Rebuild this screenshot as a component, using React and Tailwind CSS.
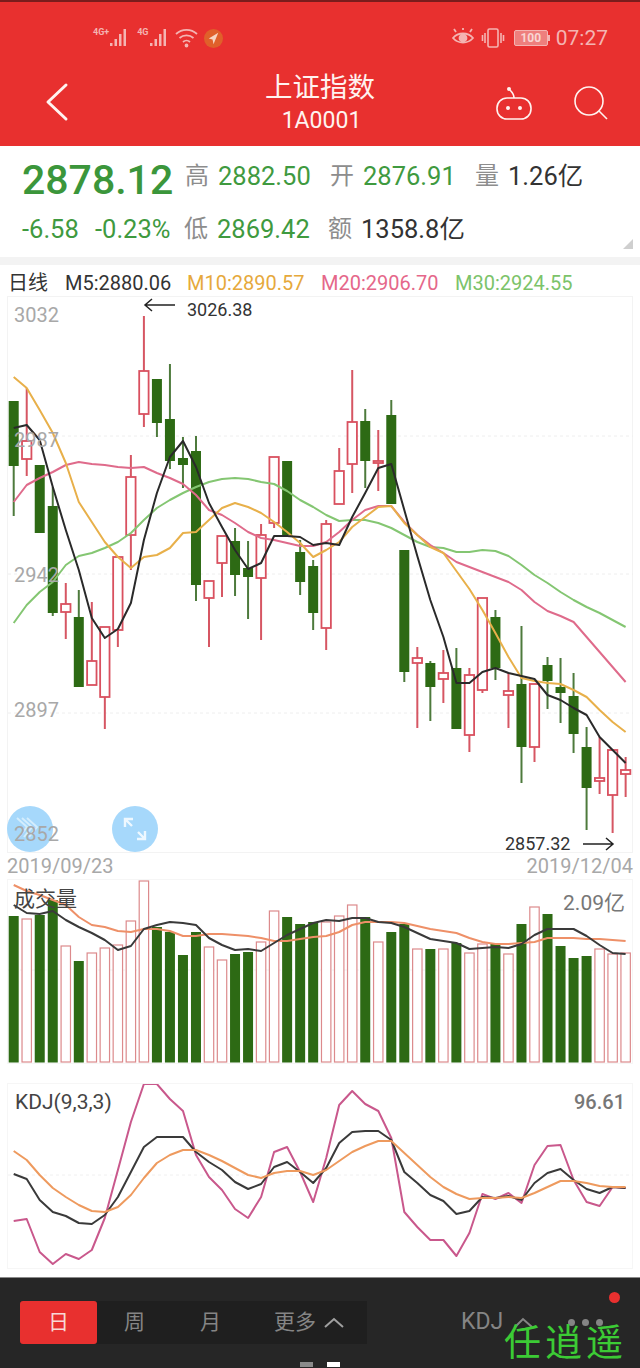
import React from "react";

const xAt = (i) => 13.7 + 13.02 * i;

// [high, bodyTop, bodyBottom, low, isUp]
const candles = [
  [401, 401, 466, 516, 0], [388, 441, 459, 476, 1], [465, 465, 533, 533, 0], [487, 506, 613, 616, 0],
  [583, 604, 612, 639, 1], [590, 617, 687, 687, 0], [602, 661, 685, 685, 1], [627, 627, 697, 729, 1],
  [556, 557, 630, 647, 1], [455, 477, 535, 570, 1], [316, 371, 414, 427, 1], [379, 379, 423, 437, 0],
  [364, 419, 461, 469, 0], [437, 458, 465, 488, 0], [436, 451, 585, 601, 0], [581, 581, 598, 647, 1],
  [536, 536, 563, 597, 1], [528, 541, 575, 596, 0], [541, 568, 577, 619, 0], [524, 535, 578, 640, 1],
  [457, 457, 523, 528, 1], [461, 461, 535, 535, 0], [540, 552, 582, 595, 0], [560, 566, 613, 630, 0],
  [520, 524, 628, 650, 1], [448, 471, 504, 504, 1], [370, 422, 464, 493, 1], [409, 421, 461, 488, 0],
  [430, 461, 463, 491, 1], [400, 415, 504, 504, 0], [550, 550, 672, 682, 0], [647, 658, 663, 728, 1],
  [661, 663, 687, 721, 0], [650, 673, 679, 703, 1], [648, 668, 729, 729, 0], [668, 675, 735, 752, 1],
  [598, 598, 690, 693, 1], [610, 617, 668, 680, 0], [673, 691, 695, 728, 1], [626, 684, 747, 783, 0],
  [684, 684, 747, 762, 1], [657, 665, 681, 709, 0], [658, 687, 693, 723, 0], [673, 696, 734, 753, 0],
  [727, 747, 788, 830, 0], [737, 778, 781, 794, 1], [750, 750, 795, 833, 1], [757, 770, 774, 797, 1],
];

const m5 = [428, 425, 440, 487, 530, 570, 618, 638, 629, 603, 540, 493, 457, 441, 467, 503, 527, 550, 569, 563, 536, 536, 537, 545, 543, 545, 517, 493, 468, 464, 510, 556, 600, 637, 683, 683, 672, 668, 673, 676, 679, 695, 700, 708, 715, 737, 750, 763];
const m10 = [377, 388, 410, 433, 463, 502, 522, 542, 557, 568, 557, 555, 548, 533, 532, 520, 508, 503, 507, 513, 522, 532, 543, 557, 550, 542, 527, 517, 507, 506, 523, 535, 547, 553, 571, 589, 610, 633, 657, 678, 681, 683, 684, 690, 697, 710, 722, 732];
const m20 = [502, 485, 478, 472, 465, 462, 464, 465, 467, 468, 467, 473, 478, 484, 495, 510, 515, 523, 532, 538, 540, 543, 546, 546, 542, 532, 520, 510, 506, 506, 522, 535, 545, 553, 562, 567, 572, 577, 582, 590, 602, 611, 616, 622, 637, 652, 667, 682];
const m30 = [623, 605, 592, 582, 565, 556, 553, 548, 542, 533, 520, 508, 500, 493, 487, 482, 479, 478, 479, 482, 484, 491, 500, 507, 515, 521, 520, 520, 523, 528, 535, 542, 547, 548, 552, 552, 550, 551, 556, 565, 575, 583, 592, 600, 607, 613, 620, 627];

const volTops = [916, 919, 915, 900, 946, 961, 953, 948, 945, 921, 881, 927, 932, 955, 932, 947, 960, 954, 952, 942, 911, 917, 924, 922, 922, 916, 905, 917, 942, 932, 924, 949, 949, 949, 943, 953, 944, 943, 954, 924, 907, 914, 946, 958, 956, 949, 954, 953];
const volDark = [905, 913, 914, 911, 920, 927, 933, 940, 950, 946, 929, 925, 922, 923, 925, 938, 945, 950, 949, 951, 943, 935, 929, 923, 920, 921, 918, 918, 922, 923, 927, 933, 939, 941, 943, 949, 948, 947, 948, 944, 935, 929, 929, 929, 936, 945, 953, 954];
const volOrange = [885, 891, 895, 900, 905, 917, 925, 927, 931, 932, 929, 929, 931, 936, 936, 934, 934, 935, 936, 938, 941, 941, 939, 937, 936, 932, 925, 922, 922, 922, 923, 926, 929, 931, 933, 938, 942, 944, 944, 943, 942, 938, 938, 938, 939, 939, 940, 941];

const kLine = [1174, 1179, 1200, 1212, 1216, 1223, 1224, 1215, 1197, 1172, 1147, 1137, 1137, 1137, 1152, 1162, 1170, 1182, 1189, 1184, 1167, 1162, 1172, 1183, 1168, 1143, 1132, 1131, 1131, 1140, 1172, 1183, 1195, 1201, 1214, 1211, 1197, 1198, 1196, 1200, 1183, 1173, 1169, 1180, 1189, 1193, 1187, 1188];
const dLine = [1151, 1160, 1175, 1188, 1197, 1205, 1211, 1212, 1207, 1195, 1178, 1163, 1155, 1150, 1150, 1155, 1161, 1168, 1175, 1178, 1173, 1171, 1171, 1175, 1170, 1161, 1152, 1146, 1141, 1141, 1153, 1165, 1177, 1187, 1194, 1199, 1198, 1198, 1197, 1198, 1193, 1187, 1181, 1181, 1183, 1186, 1187, 1187];
const jLine = [1221, 1219, 1252, 1264, 1254, 1259, 1250, 1218, 1170, 1122, 1084, 1084, 1099, 1111, 1155, 1177, 1190, 1209, 1218, 1197, 1152, 1147, 1172, 1202, 1158, 1105, 1091, 1104, 1111, 1138, 1212, 1227, 1240, 1240, 1256, 1233, 1194, 1199, 1193, 1203, 1165, 1146, 1145, 1180, 1202, 1206, 1187, 1188];

function Line({ values, color, width = 2 }) {
  const points = values.map((y, i) => `${xAt(i).toFixed(1)},${y}`).join(" ");
  return <polyline points={points} fill="none" stroke={color} strokeWidth={width} strokeLinejoin="round" />;
}

function Candle({ c, i }) {
  const [high, top, bottom, low, up] = c;
  const x = xAt(i);
  const wick = up ? "#d65663" : "#4d7a3c";
  return (
    <g>
      <line x1={x} x2={x} y1={high} y2={low} stroke={wick} strokeWidth="2" />
      {up ? (
        <rect x={x - 4.7} y={top} width="9.4" height={bottom - top} fill="#fff" stroke="#d9505f" strokeWidth="1.8" />
      ) : (
        <rect x={x - 5} y={top} width="10" height={bottom - top} fill="#2d6a14" />
      )}
    </g>
  );
}

function SignalBars() {
  return (
    <svg width="20" height="20" viewBox="0 0 20 20" fill="#f4b4b2">
      <rect x="1" y="15" width="2.500" height="3" />
      <rect x="5.500" y="11" width="2.500" height="7" />
      <rect x="10" y="6" width="2.500" height="12" />
      <rect x="14.500" y="1" width="2.500" height="17" />
    </svg>
  );
}

function StatusBar() {
  return (
    <div className="flex h-[72px] items-center justify-between pl-[93px] pr-[32px] text-[#f4b4b2]">
      <div className="flex items-center">
        <span className="mb-3 text-[9px] font-bold leading-none">4G+</span>
        <SignalBars />
        <span className="mb-3 ml-[8px] text-[9px] font-bold leading-none">4G</span>
        <SignalBars />
        <svg className="ml-[5px]" width="25" height="22" viewBox="0 0 25 22" fill="none" stroke="#f4b4b2" strokeWidth="1.8">
          <path d="M2 7c6-5.500 15-5.500 21 0" />
          <path d="M5.500 11c4-3.500 10-3.500 14 0" />
          <path d="M9 15c2-1.800 5-1.800 7 0" />
          <circle cx="12.500" cy="18.500" r="1" fill="#f4b4b2" />
        </svg>
        <svg className="ml-[5px]" width="19" height="19" viewBox="0 0 20 20">
          <circle cx="10" cy="10" r="10" fill="#e0602a" />
          <path d="M15 4 5 10l4 1 1 5 5-12Z" fill="#f7d4c0" />
        </svg>
      </div>
      <div className="flex items-center">
        <svg width="24" height="22" viewBox="0 0 24 22" fill="none" stroke="#f4b4b2" strokeWidth="1.8">
          <path d="M2 11c5-6 15-6 20 0-5 6-15 6-20 0Z" />
          <circle cx="12" cy="11" r="3.500" fill="#f4b4b2" />
          <path d="M5 5 3 2M12 3V1M19 5l2-3" />
        </svg>
        <svg className="ml-[6px]" width="24" height="22" viewBox="0 0 24 22" fill="none" stroke="#f4b4b2" strokeWidth="1.6">
          <rect x="7" y="2" width="10" height="18" rx="1.500" />
          <path d="M4 6v10M1.500 8v6M20 6v10M22.500 8v6" />
        </svg>
        <span className="ml-[9px] flex h-[16px] w-[34px] items-center justify-center rounded-[2px] border border-[#f4b4b2] bg-[#ee7f7d] text-[12px] font-bold leading-none text-[#f9d5d3]">
          100
        </span>
        <span className="h-[6px] w-[2px] bg-[#f4b4b2]" />
        <span className="ml-[6px] text-[21px] leading-none">07:27</span>
      </div>
    </div>
  );
}

function TitleBar() {
  return (
    <div className="grid h-[72px] grid-cols-[1fr_auto_1fr] text-[#fff3f0]">
      <div className="pl-[44px] pt-[8px]">
        <svg width="26" height="40" viewBox="0 0 26 40" fill="none" stroke="#fff3f0" strokeWidth="3" strokeLinecap="round" strokeLinejoin="round">
          <path d="M22 3 4 20l18 17" />
        </svg>
      </div>
      <div className="flex flex-col items-center">
        <div className="text-[27.500px] leading-[28px]">上证指数</div>
        <div className="ml-[3px] mt-[5px] text-[23px] leading-[28px]">1A0001</div>
      </div>
      <div className="flex items-start justify-end gap-[40px] pr-[31px] pt-[12px]">
        <svg width="38" height="36" viewBox="0 0 38 36" fill="none" stroke="#fff3f0" strokeWidth="1.600">
          <rect x="2" y="12" width="34" height="21" rx="10" />
          <path d="M19 12c0-4-2-6-4-8" />
          <circle cx="14" cy="3" r="1.200" fill="#fff3f0" />
          <circle cx="13" cy="22" r="1.200" fill="#fff3f0" />
          <circle cx="25" cy="22" r="1.200" fill="#fff3f0" />
        </svg>
        <svg width="36" height="36" viewBox="0 0 36 36" fill="none" stroke="#fff3f0" strokeWidth="1.600">
          <circle cx="16" cy="15" r="14" />
          <path d="m26 25 8 8" />
        </svg>
      </div>
    </div>
  );
}

function Stat({ label, value, color = "text-[#3f9a3f]", width = "w-[145px]" }) {
  return (
    <div className={`flex items-center ${width}`}>
      <span className="w-[33px] text-[24px] text-[#8d8d8d]">{label}</span>
      <span className={`text-[25.500px] ${color}`}>{value}</span>
    </div>
  );
}

function Stats() {
  return (
    <div className="relative h-[111px]">
      <div className="flex h-[60px] items-center pl-[22px]">
        <div className="mt-[8px] w-[163px] text-[41px] font-medium leading-none text-[#3b963b]">2878.12</div>
        <Stat label="高" value="2882.50" />
        <Stat label="开" value="2876.91" />
        <Stat label="量" value="1.26亿" color="text-[#333333]" />
      </div>
      <div className="flex h-[46px] items-center pl-[22px]">
        <span className="w-[73px] text-[25.500px] text-[#3f9a3f]">-6.58</span>
        <span className="w-[89px] text-[25.500px] text-[#3f9a3f]">-0.23%</span>
        <Stat label="低" value="2869.42" width="w-[144px]" />
        <Stat label="额" value="1358.8亿" color="text-[#333333]" />
      </div>
      <div className="absolute bottom-[8px] right-[7px] h-0 w-0 border-b-[10px] border-l-[10px] border-b-[#cfcfcf] border-l-transparent" />
    </div>
  );
}

function Legend() {
  return (
    <div className="flex h-[32px] items-center pl-[8px] pt-[4px] text-[20px]">
      <span className="w-[57px] text-[#333333]">日线</span>
      <span className="w-[122px] text-[#333333]">M5:2880.06</span>
      <span className="w-[134px] text-[#e6a93c]">M10:2890.57</span>
      <span className="w-[134px] text-[#e5678a]">M20:2906.70</span>
      <span className="text-[#7cc36a]">M30:2924.55</span>
    </div>
  );
}

function AxisLabel({ className, children }) {
  return <span className={`absolute left-[6px] text-[20px] leading-none text-[#a8a8a8] ${className}`}>{children}</span>;
}

function MainChart() {
  return (
    <div className="relative mx-[8px] h-[555px] ring-1 ring-[#f3f3f3]">
      <svg className="block" width="625" height="555" viewBox="8 297 625 555">
        {[436, 574, 713].map((y) => (
          <line key={y} x1="8" x2="633" y1={y} y2={y} stroke="#eeeeee" strokeWidth="1" strokeDasharray="3 3" />
        ))}
        {candles.map((c, i) => (
          <Candle key={i} c={c} i={i} />
        ))}
        <Line values={m30} color="#84c672" />
        <Line values={m20} color="#df6b8b" />
        <Line values={m10} color="#e8b04a" />
        <Line values={m5} color="#2a2a2a" />
        <path d="M175 305h-30m7-6-7 6 7 6" fill="none" stroke="#222" strokeWidth="1.500" />
        <path d="M583 844h30m-7-6 7 6-7 6" fill="none" stroke="#222" strokeWidth="1.500" />
      </svg>
      <AxisLabel className="top-[8px]">3032</AxisLabel>
      <AxisLabel className="top-[133px]">2987</AxisLabel>
      <AxisLabel className="top-[268px]">2942</AxisLabel>
      <AxisLabel className="top-[403px]">2897</AxisLabel>
      <span className="absolute left-[179px] top-[4px] text-[18px] leading-none text-[#333333]">3026.38</span>
      <span className="absolute left-[497px] top-[538px] text-[18px] leading-none text-[#333333]">2857.32</span>
      <div className="absolute left-[-1px] top-[509px] flex h-[46px] w-[46px] items-center justify-center rounded-full bg-[#a6d8fb]">
        <svg width="28" height="28" viewBox="0 0 28 28" fill="none" stroke="#d4edfd" strokeWidth="2">
          <path d="m1 3 10 9-8 10M6 3l10 9-8 10M11 3l10 9-8 10" />
        </svg>
      </div>
      <AxisLabel className="top-[527px] text-[#7f9fb5]">2852</AxisLabel>
      <div className="absolute left-[104px] top-[509px] flex h-[46px] w-[46px] items-center justify-center rounded-full bg-[#a6d8fb]">
        <svg width="26" height="26" viewBox="0 0 26 26" fill="none" stroke="#eef8ff" strokeWidth="2.400">
          <path d="M3 11V3h8M3 3l7 7M16 16l7 7M15 23h8v-8" />
        </svg>
      </div>
    </div>
  );
}

function VolumeChart() {
  return (
    <div className="relative mx-[8px] h-[183px] ring-1 ring-[#f6f6f6]">
      <svg className="block" width="625" height="183" viewBox="8 880 625 183">
        <line x1="8" x2="633" y1="970" y2="970" stroke="#f2f2f2" strokeDasharray="3 3" />
        {volTops.map((top, i) =>
          candles[i][4] ? (
            <rect key={i} x={xAt(i) - 4.7} y={top} width="9.4" height={1062 - top} fill="#fff" stroke="#dc8a8c" strokeWidth="1.200" />
          ) : (
            <rect key={i} x={xAt(i) - 5} y={top} width="10" height={1062.500 - top} fill="#2d6a14" />
          )
        )}
        <Line values={volOrange} color="#ee9068" />
        <Line values={volDark} color="#3a3a3a" />
      </svg>
      <span className="absolute left-[6px] top-[9px] text-[21px] leading-none text-[#444444]">成交量</span>
      <span className="absolute right-[7px] top-[13px] text-[21px] leading-none text-[#777777]">2.09亿</span>
    </div>
  );
}

function KdjChart() {
  return (
    <div className="relative mx-[8px] h-[184px] ring-1 ring-[#f6f6f6]">
      <svg className="block" width="625" height="184" viewBox="8 1084 625 184">
        <line x1="8" x2="633" y1="1175" y2="1175" stroke="#f0f0f0" strokeDasharray="3 3" />
        <Line values={jLine} color="#c9588c" />
        <Line values={kLine} color="#3a3a3a" />
        <Line values={dLine} color="#ee9a5e" />
      </svg>
      <span className="absolute left-[7px] top-[8px] text-[21px] leading-none text-[#444444]">KDJ(9,3,3)</span>
      <span className="absolute right-[7px] top-[8px] text-[20px] font-medium leading-none text-[#777777]">96.61</span>
    </div>
  );
}

function BottomBar() {
  return (
    <div className="relative h-[91px] border-t border-[#8a8a8a] bg-[#262626] text-[21px] text-[#858585]">
      <div className="flex items-center pl-[20px] pt-[23px]">
        <div className="flex h-[43px] w-[347px] items-center bg-[#1f1f1f]">
          <div className="flex h-full w-[77px] items-center justify-center rounded-[3px] bg-[#e8302f] text-[#f8d8d6]">日</div>
          <span className="ml-[27px]">周</span>
          <span className="ml-[55px]">月</span>
          <span className="ml-[53px]">更多</span>
          <svg className="ml-[8px]" width="20" height="12" viewBox="0 0 20 12" fill="none" stroke="#a0a0a0" strokeWidth="2">
            <path d="m1 10 9-8 9 8" />
          </svg>
        </div>
        <span className="ml-[94px] text-[23px]">KDJ</span>
        <svg className="ml-[11px]" width="19" height="12" viewBox="0 0 19 12" fill="none" stroke="#858585" strokeWidth="2">
          <path d="m1 10 8-8 9 8" />
        </svg>
        <div className="ml-[35px] flex gap-[7px]">
          <span className="h-[7px] w-[7px] rounded-full bg-[#858585]" />
          <span className="h-[7px] w-[7px] rounded-full bg-[#858585]" />
          <span className="h-[7px] w-[7px] rounded-full bg-[#858585]" />
        </div>
      </div>
      <div className="absolute bottom-[1px] left-[300px] flex gap-[14px]">
        <span className="h-[5px] w-[13px] bg-[#8a8a8a]" />
        <span className="h-[5px] w-[13px] bg-white" />
      </div>
      <span className="absolute left-[609px] top-[14px] h-[11px] w-[11px] rounded-full bg-[#e8302f]" />
      <span className="absolute left-[504px] top-[47px] text-[37px] leading-none tracking-[4px] text-[#3ccb35]">任逍遥</span>
    </div>
  );
}

export default function App() {
  return (
    <div className="h-[1368px] w-[640px] overflow-hidden bg-white font-[Roboto,'Noto_Sans_CJK_SC',sans-serif]">
      <div className="h-[146px] bg-[#e8302f]">
        <div className="h-[2px] bg-[#7a1c1c]" />
        <StatusBar />
        <TitleBar />
      </div>
      <Stats />
      <div className="h-[8px] bg-[#f3f3f3]" />
      <Legend />
      <MainChart />
      <div className="flex h-[28px] items-center justify-between pl-[7px] pr-[7px] text-[20px] text-[#a8a8a8]">
        <span>2019/09/23</span>
        <span>2019/12/04</span>
      </div>
      <VolumeChart />
      <div className="h-[21px]" />
      <KdjChart />
      <div className="h-[9px]" />
      <BottomBar />
    </div>
  );
}
